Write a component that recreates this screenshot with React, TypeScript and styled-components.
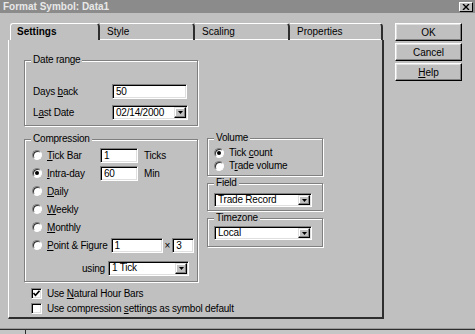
import React from 'react'
import styled, { createGlobalStyle } from 'styled-components'

const GlobalStyle = createGlobalStyle`
  html, body {
    margin: 0;
    padding: 0;
    background: #c0c0c0;
  }
  body {
    font-family: "Liberation Sans", Arial, sans-serif;
    font-size: 10px;
    letter-spacing: -0.2px;
    color: #000;
  }
`

const Window = styled.div`
  width: 475px;
  height: 334px;
  display: flex;
  flex-direction: column;
  background: #c0c0c0;
  overflow: hidden;
`

const TitleBar = styled.div`
  flex: none;
  height: 13px;
  display: flex;
  justify-content: space-between;
  padding: 0 2px 0 3px;
  background: #8b8b8b;
`
const Title = styled.span`
  color: #e8e8e8;
  font-weight: bold;
  line-height: 13px;
  letter-spacing: 0;
`
const CloseBox = styled.div`
  width: 14px;
  height: 10px;
  margin-top: 2px;
  box-sizing: border-box;
  background: #c0c0c0;
  border: 1px solid;
  border-color: #fff #000 #000 #fff;
  display: flex;
  align-items: center;
  justify-content: center;
`

const Body = styled.div`
  flex: 1;
  display: flex;
  align-items: flex-start;
  gap: 11px;
  padding: 10px 0 0 8px;
`

// tab control
const TabControl = styled.div`
  display: flex;
  flex-direction: column;
`
const TabRow = styled.div`
  display: flex;
  height: 17px;
  padding-left: 2px;
`
const Tab = styled.div<{ $width: number; $active?: boolean }>`
  width: ${p => p.$width}px;
  box-sizing: border-box;
  padding-left: ${p => (p.$active ? 6 : 7)}px;
  border-top: 1px solid #fff;
  border-right: 2px solid #2e2e2e;
  border-top-right-radius: 4px;
  line-height: 15px;
  font-weight: ${p => (p.$active ? 'bold' : 'normal')};
  letter-spacing: 0;
  box-shadow: ${p => (p.$active ? 'none' : 'inset 0 -1px 0 #fff')};
  &:first-child {
    border-left: 1px solid #fff;
    border-top-left-radius: 3px;
  }
`
const Panel = styled.div`
  width: 376px;
  height: 279px;
  box-sizing: border-box;
  border-left: 1px solid #fff;
  border-right: 2px solid #2e2e2e;
  border-bottom: 2px solid #2e2e2e;
  padding: 20px 0 0 15px;
`

// group boxes
const GroupBox = styled.div<{ $width: number }>`
  width: ${p => p.$width}px;
  box-sizing: border-box;
  border: 1px solid #808080;
  box-shadow: 1px 1px 0 #fff, inset 1px 1px 0 #fff;
`
const GroupLabel = styled.span`
  display: table;
  margin: -7px 0 0 6px;
  padding: 0 2px;
  line-height: 12px;
  background: #c0c0c0;
`
const GroupBody = styled.div<{ $pad: string }>`
  padding: ${p => p.$pad};
  display: flex;
  flex-direction: column;
`

const Row = styled.div<{ $h: number; $gap?: number }>`
  display: flex;
  align-items: center;
  height: ${p => p.$h}px;
  margin-top: ${p => p.$gap || 0}px;
`
const Label = styled.span<{ $w?: number }>`
  width: ${p => (p.$w ? p.$w + 'px' : 'auto')};
  flex: none;
  white-space: nowrap;
`
const Unit = styled.span<{ $ml?: number; $mr?: number }>`
  margin-left: ${p => p.$ml || 0}px;
  margin-right: ${p => p.$mr || 0}px;
`
const Key = styled.span`
  text-decoration: underline;
`

const sunken = `
  box-sizing: border-box;
  border: 1px solid;
  border-color: #808080 #fff #fff #808080;
  box-shadow: inset 1px 1px 0 #000, inset -1px -1px 0 #dfdfdf;
  background: #fff;
`

const TextBox = styled.input<{ $width: number }>`
  ${sunken}
  width: ${p => p.$width}px;
  height: 15px;
  flex: none;
  margin: 0;
  padding: 0 3px;
  font: inherit;
  letter-spacing: inherit;
  color: #000;
  outline: none;
`
const Combo = styled.div<{ $width: number; $height?: number }>`
  ${sunken}
  width: ${p => p.$width}px;
  height: ${p => p.$height || 15}px;
  flex: none;
  display: flex;
  align-items: stretch;
  padding: 1px 1px 1px 3px;
`
const ComboText = styled.span`
  flex: 1;
  display: flex;
  align-items: center;
  white-space: nowrap;
  line-height: 1;
`
const DropButton = styled.span`
  width: 12px;
  box-sizing: border-box;
  background: #c0c0c0;
  border: 1px solid;
  border-color: #dfdfdf #000 #000 #dfdfdf;
  box-shadow: inset -1px -1px 0 #808080, inset 1px 1px 0 #fff;
  display: flex;
  align-items: center;
  justify-content: center;
`

const Radio = styled.span<{ $checked?: boolean }>`
  width: 10px;
  height: 10px;
  flex: none;
  margin-right: 5px;
  box-sizing: border-box;
  border-radius: 50%;
  border: 1px solid;
  border-color: #808080 #fff #fff #808080;
  box-shadow: inset 1px 1px 0 #303030;
  background: #fff;
  display: flex;
  align-items: center;
  justify-content: center;
  &::after {
    content: '';
    width: 4px;
    height: 4px;
    border-radius: 50%;
    background: ${p => (p.$checked ? '#000' : 'transparent')};
  }
`
const Check = styled.span`
  ${sunken}
  width: 11px;
  height: 11px;
  flex: none;
  margin: 0 5px 0 7px;
  display: flex;
  align-items: center;
  justify-content: center;
`

const Columns = styled.div`
  display: flex;
  align-items: flex-start;
  gap: 9px;
  margin-top: 13px;
`
const RightColumn = styled.div`
  display: flex;
  flex-direction: column;
  gap: 7px;
  margin-top: -1px;
`
const Checks = styled.div`
  margin-top: 4px;
`

// buttons
const ButtonColumn = styled.div`
  display: flex;
  flex-direction: column;
  gap: 2px;
`
const Button = styled.button`
  width: 67px;
  height: 18px;
  box-sizing: border-box;
  padding: 0;
  margin: 0;
  font: inherit;
  letter-spacing: 0;
  color: #000;
  background: #c0c0c0;
  border: 1px solid;
  border-color: #fff #000 #000 #fff;
  box-shadow: inset -1px -1px 0 #808080, inset 1px 1px 0 #dfdfdf;
`

const BottomBar = styled.div`
  flex: none;
  height: 6px;
  background: #c6c6c6;
  border-top: 1px solid #9a9a9a;
  box-shadow: inset 0 1px 0 #2e2e2e;
  box-sizing: border-box;
  display: flex;
`
const BottomTick = styled.span`
  width: 1px;
  margin-left: 25px;
  background: #2e2e2e;
`

const Arrow = () => (
  <svg width="5" height="3" viewBox="0 0 5 3">
    <polygon points="0,0 5,0 2.5,3" fill="#000" />
  </svg>
)

const DropCombo = ({ value, width, height }: { value: string; width: number; height?: number }) => (
  <Combo $width={width} $height={height}>
    <ComboText>{value}</ComboText>
    <DropButton>
      <Arrow />
    </DropButton>
  </Combo>
)

const tabs = [
  { name: 'Settings', width: 90 },
  { name: 'Style', width: 95 },
  { name: 'Scaling', width: 95 },
  { name: 'Properties', width: 93 },
]

export default function App() {
  return (
    <Window>
      <GlobalStyle />
      <TitleBar>
        <Title>Format Symbol: Data1</Title>
        <CloseBox>
          <svg width="8" height="6" viewBox="0 0 8 6">
            <path d="M1 0 L7 6 M7 0 L1 6" stroke="#000" strokeWidth="1.4" />
          </svg>
        </CloseBox>
      </TitleBar>
      <Body>
        <TabControl>
          <TabRow>
            {tabs.map((t, i) => (
              <Tab key={t.name} $width={t.width} $active={i === 0}>
                {t.name}
              </Tab>
            ))}
          </TabRow>
          <Panel>
            <GroupBox $width={174}>
              <GroupLabel>Date range</GroupLabel>
              <GroupBody $pad="18px 0 5px 8px">
                <Row $h={15}>
                  <Label $w={79}>
                    Days <Key>b</Key>ack
                  </Label>
                  <TextBox $width={75} defaultValue="50" readOnly />
                </Row>
                <Row $h={15} $gap={6}>
                  <Label $w={79}>
                    L<Key>a</Key>st Date
                  </Label>
                  <DropCombo value="02/14/2000" width={76} />
                </Row>
              </GroupBody>
            </GroupBox>

            <Columns>
              <GroupBox $width={174}>
                <GroupLabel>Compression</GroupLabel>
                <GroupBody $pad="1px 0 4px 7px">
                  <Row $h={18}>
                    <Radio />
                    <Label $w={53}>
                      <Key>T</Key>ick Bar
                    </Label>
                    <TextBox $width={38} defaultValue="1" readOnly />
                    <Unit $ml={6}>Ticks</Unit>
                  </Row>
                  <Row $h={18}>
                    <Radio $checked />
                    <Label $w={53}>
                      <Key>I</Key>ntra-day
                    </Label>
                    <TextBox $width={38} defaultValue="60" readOnly />
                    <Unit $ml={6}>Min</Unit>
                  </Row>
                  <Row $h={18}>
                    <Radio />
                    <Label>
                      <Key>D</Key>aily
                    </Label>
                  </Row>
                  <Row $h={18}>
                    <Radio />
                    <Label>
                      <Key>W</Key>eekly
                    </Label>
                  </Row>
                  <Row $h={18}>
                    <Radio />
                    <Label>
                      <Key>M</Key>onthly
                    </Label>
                  </Row>
                  <Row $h={18}>
                    <Radio />
                    <Label>
                      <Key>P</Key>oint &amp; Figure
                    </Label>
                    <Unit $mr={3} />
                    <TextBox $width={52} defaultValue="1" readOnly />
                    <Unit $ml={2} $mr={2}>×</Unit>
                    <TextBox $width={22} defaultValue="3" readOnly />
                  </Row>
                  <Row $h={18} $gap={5}>
                    <Label $w={26} style={{ marginLeft: 50 }}>
                      using
                    </Label>
                    <DropCombo value="1 Tick" width={81} />
                  </Row>
                </GroupBody>
              </GroupBox>

              <RightColumn>
                <GroupBox $width={116}>
                  <GroupLabel>Volume</GroupLabel>
                  <GroupBody $pad="2px 0 3px 6px">
                    <Row $h={13}>
                      <Radio $checked />
                      <Label>
                        Tick <Key>c</Key>ount
                      </Label>
                    </Row>
                    <Row $h={13}>
                      <Radio />
                      <Label>
                        T<Key>r</Key>ade volume
                      </Label>
                    </Row>
                  </GroupBody>
                </GroupBox>
                <GroupBox $width={116}>
                  <GroupLabel>Field</GroupLabel>
                  <GroupBody $pad="4px 0 3px 6px">
                    <DropCombo value="Trade Record" width={98} height={14} />
                  </GroupBody>
                </GroupBox>
                <GroupBox $width={116}>
                  <GroupLabel>Timezone</GroupLabel>
                  <GroupBody $pad="2px 0 6px 6px">
                    <DropCombo value="Local" width={98} height={14} />
                  </GroupBody>
                </GroupBox>
              </RightColumn>
            </Columns>

            <Checks>
              <Row $h={15}>
                <Check>
                  <svg width="7" height="7" viewBox="0 0 7 7">
                    <path d="M0.5 3 L2.5 5.2 L6.5 0.8" stroke="#000" strokeWidth="1.6" fill="none" />
                  </svg>
                </Check>
                <Label>
                  Use <Key>N</Key>atural Hour Bars
                </Label>
              </Row>
              <Row $h={15}>
                <Check />
                <Label>
                  Use compression <Key>s</Key>ettings as symbol default
                </Label>
              </Row>
            </Checks>
          </Panel>
        </TabControl>

        <ButtonColumn>
          <Button>OK</Button>
          <Button>Cancel</Button>
          <Button>
            <Key>H</Key>elp
          </Button>
        </ButtonColumn>
      </Body>
      <BottomBar>
        <BottomTick />
      </BottomBar>
    </Window>
  )
}
